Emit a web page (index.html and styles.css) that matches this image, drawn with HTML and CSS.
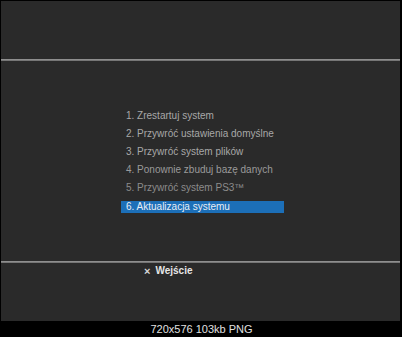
FILE: index.html
```html
<!DOCTYPE html>
<html>
<head>
<meta charset="utf-8">
<link rel="stylesheet" href="styles.css">
</head>
<body>
<div class="frame">
  <div class="screen">
    <div class="rule"></div>
    <ul class="menu">
      <li class="item">1. Zrestartuj system</li>
      <li class="item">2. Przywróć ustawienia domyślne</li>
      <li class="item">3. Przywróć system plików</li>
      <li class="item dim">4. Ponownie zbuduj bazę danych</li>
      <li class="item dimmer">5. Przywróć system PS3™</li>
      <li class="item active"><span class="bar">6. Aktualizacja systemu</span></li>
    </ul>
    <div class="rule bottom"></div>
    <div class="hint"><span class="cross">×</span><span class="hint-label">Wejście</span></div>
  </div>
  <div class="caption">720x576 103kb PNG</div>
</div>
</body>
</html>
```
FILE: styles.css
```css
html, body {
  margin: 0;
  padding: 0;
  background: #000;
}
.frame {
  width: 402px;
  height: 337px;
  display: flex;
  flex-direction: column;
  font-family: "Liberation Sans", Arial, sans-serif;
}
.screen {
  margin: 1px 2px 0 1px;
  height: 320px;
  background: #2a2a2a;
  display: flex;
  flex-direction: column;
  padding-top: 58px;
  box-sizing: border-box;
}
.rule {
  height: 2px;
  background: linear-gradient(#9a9a9a, #6a6a6a);
}
.rule.bottom {
  margin-top: 46px;
}
.menu {
  list-style: none;
  margin: 46px 0 0 0;
  padding: 0 0 0 120px;
  display: flex;
  flex-direction: column;
}
.item {
  height: 18px;
  line-height: 18px;
  font-size: 10px;
  color: #a8a8a8;
  padding-left: 5px;
  white-space: nowrap;
}
.item.dim { color: #9a9a9a; }
.item.dimmer { color: #8c8c8c; }
.item.active {
  padding-left: 0;
  display: flex;
  align-items: center;
}
.bar {
  display: block;
  width: 158px;
  height: 12px;
  line-height: 12px;
  margin-top: 2px;
  padding-left: 5px;
  background: #1c6fb8;
  color: #e8eef5;
}
.hint {
  display: flex;
  align-items: center;
  height: 13px;
  margin-top: 1px;
  padding-left: 143px;
  font-size: 10px;
  color: #e6e6e6;
  font-weight: bold;
}
.cross {
  font-size: 11px;
  margin-right: 5px;
  color: #d8d8d8;
}
.caption {
  flex: 1;
  display: flex;
  align-items: center;
  justify-content: center;
  color: #e0e0e0;
  font-size: 11px;
  padding-left: 1px;
}
```
